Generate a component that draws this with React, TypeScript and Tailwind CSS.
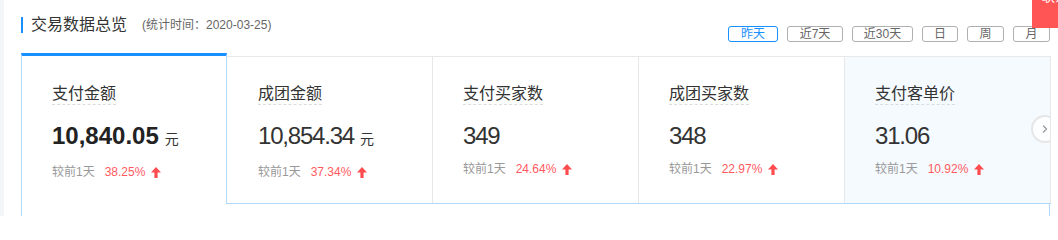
import { ChevronRight } from 'lucide-react'

interface Stat {
  label: string
  value: string
  unit?: string
  percent: string
}

const stats: Stat[] = [
  { label: '支付金额', value: '10,840.05', unit: '元', percent: '38.25%' },
  { label: '成团金额', value: '10,854.34', unit: '元', percent: '37.34%' },
  { label: '支付买家数', value: '349', percent: '24.64%' },
  { label: '成团买家数', value: '348', percent: '22.97%' },
  { label: '支付客单价', value: '31.06', percent: '10.92%' },
]

const ranges = [
  { label: '昨天', width: 'w-[50px]' },
  { label: '近7天', width: 'w-[56px]' },
  { label: '近30天', width: 'w-[61px]' },
  { label: '日', width: 'w-[36px]' },
  { label: '周', width: 'w-[37px]' },
  { label: '月', width: 'w-[37px]' },
]

function UpArrow() {
  return (
    <svg width="10" height="11" viewBox="0 0 10 11" className="ml-[6px]">
      <path d="M5 0 L10 5.5 L6.6 5.5 L6.6 11 L3.4 11 L3.4 5.5 L0 5.5 Z" fill="#ff4d4f" />
    </svg>
  )
}

function StatBody({ stat, active }: { stat: Stat; active: boolean }) {
  return (
    <>
      <div className="inline-block border-b border-dashed border-[#dcdcdc] text-[16px] leading-[20px] text-[#333]">
        {stat.label}
      </div>
      <div className="mt-[16px] flex items-baseline leading-[28px] text-[#333]">
        <span className={active ? 'text-[24px] font-bold text-[#222]' : 'text-[24px] tracking-[-1.2px]'}>
          {stat.value}
        </span>
        {stat.unit && <span className="ml-[6px] text-[14px]">{stat.unit}</span>}
      </div>
      <div className="mt-[11px] flex items-center text-[12px] leading-[16px]">
        <span className="text-[#999]">较前1天</span>
        <span className="ml-[10px] text-[#ff5a5f]">{stat.percent}</span>
        <UpArrow />
      </div>
    </>
  )
}

export default function App() {
  const [first, ...rest] = stats

  return (
    <div
      className="relative h-[216px] w-[1058px] overflow-hidden bg-[#f4f5f7] pl-[4px]"
      style={{ fontFamily: '"Liberation Sans", "Noto Sans CJK SC", sans-serif' }}
    >
      <div className="h-full bg-white pl-[17px]">
        {/* Header */}
        <div className="flex h-[53px] w-[1030px] items-start justify-between pt-[16px]">
          <div className="flex h-[17px] items-center">
            <div className="h-[16px] w-[2px] bg-[#1890ff]" />
            <span className="ml-[8px] text-[16px] text-[#333]">交易数据总览</span>
            <span className="ml-[15px] text-[12px] text-[#666]">(统计时间：2020-03-25)</span>
          </div>
          <div className="mr-[1px] mt-[10px] flex gap-[9px]">
            {ranges.map((r, i) => (
              <button
                key={r.label}
                className={`${r.width} h-[16px] rounded-[3px] border text-center text-[12px] leading-[14px] ${
                  i === 0 ? 'border-[#1890ff] text-[#1890ff]' : 'border-[#b0b0b0] text-[#666]'
                }`}
              >
                {r.label}
              </button>
            ))}
          </div>
        </div>

        {/* Cards */}
        <div className="flex items-start">
          <div className="h-[151px] w-[206px] border-x border-t-[3px] border-x-[#b5dcfd] border-t-[#1890ff] bg-white pl-[30px] pt-[26px]">
            <StatBody stat={first} active />
          </div>
          <div className="mt-[3px] flex h-[148px] border-b border-t border-b-[#aed8fc] border-t-[#e8e8e8]">
            {rest.map((s, i) => (
              <div
                key={s.label}
                className={`relative w-[206px] overflow-hidden border-r border-[#e8e8e8] pt-[25px] ${
                  i === 0 ? 'pl-[31px]' : 'pl-[30px]'
                } ${i === rest.length - 1 ? 'bg-[#f5faff]' : 'bg-white'}`}
              >
                <StatBody stat={s} active={false} />
                {i === rest.length - 1 && (
                  <div className="absolute left-[186px] top-[58px] flex h-[28px] w-[28px] items-center justify-start rounded-full border-2 border-[#e6e6e6] bg-white/70 pl-[6px]">
                    <ChevronRight className="h-[12px] w-[12px] text-[#999]" strokeWidth={2.5} />
                  </div>
                )}
              </div>
            ))}
          </div>
        </div>

        {/* Panel below */}
        <div className="h-[20px] w-[1029px] border-x border-[#aed8fc]" />
      </div>

      {/* Floating contact badge */}
      <div className="absolute left-[1032px] top-[-10px] h-[38px] w-[60px] whitespace-nowrap bg-[#ff5555] pl-[10px] text-[13px] leading-[14px] text-white">
        联系客服
      </div>
    </div>
  )
}
